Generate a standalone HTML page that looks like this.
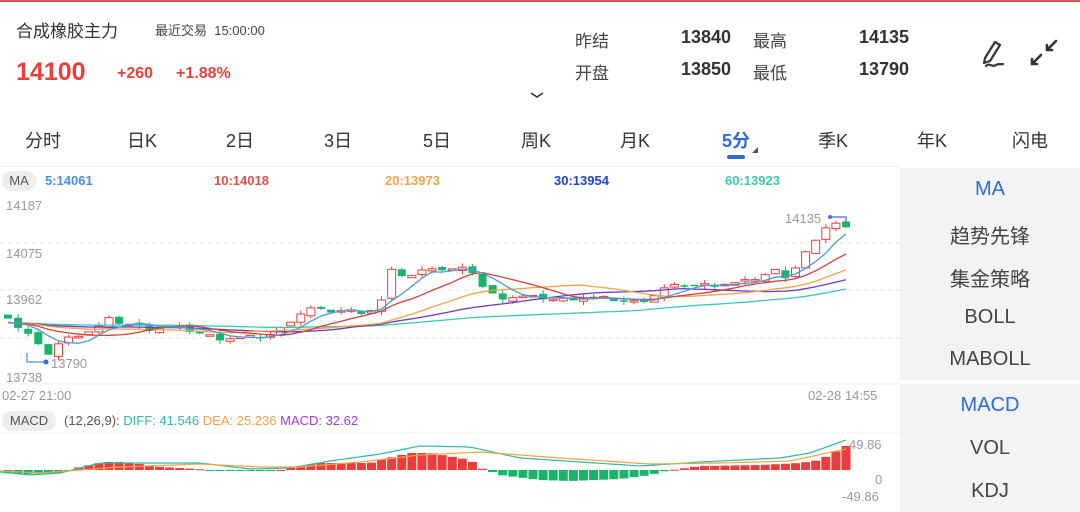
<!DOCTYPE html>
<html><head><meta charset="utf-8">
<style>
*{margin:0;padding:0;box-sizing:border-box}
body{width:1080px;height:512px;background:#fff;font-family:"Liberation Sans","Noto Sans CJK SC",sans-serif;position:relative;overflow:hidden;color:#333}
.a{position:absolute;white-space:nowrap}
.topline{position:absolute;left:0;top:0;width:1080px;height:2px;background:#d9534f}
.tab{position:absolute;top:127px;font-size:18px;color:#333;width:80px;text-align:center;margin-left:-40px}
.side{position:absolute;left:900px;width:180px;background:#f2f3f5}
.side div{position:absolute;width:180px;text-align:center;font-size:20px;color:#444}
.lab{font-size:13px;color:#999}
</style></head><body>
<div class="topline"></div>
<div class="a" style="left:16px;top:17px;font-size:17px;color:#333">合成橡胶主力</div>
<div class="a" style="left:155px;top:20px;font-size:13px;color:#444">最近交易&nbsp; 15:00:00</div>
<div class="a" style="left:16px;top:58px;font-size:25px;font-weight:bold;color:#e8413c">14100</div>
<div class="a" style="left:117px;top:65px;font-size:16px;font-weight:bold;color:#e8413c">+260</div>
<div class="a" style="left:176px;top:65px;font-size:16px;font-weight:bold;color:#e8413c">+1.88%</div>
<div class="a" style="left:575px;top:27px;font-size:17px;color:#444">昨结</div>
<div class="a" style="left:575px;top:59px;font-size:17px;color:#444">开盘</div>
<div class="a" style="left:681px;top:27px;font-size:18px;font-weight:bold;color:#333">13840</div>
<div class="a" style="left:681px;top:59px;font-size:18px;font-weight:bold;color:#333">13850</div>
<div class="a" style="left:753px;top:27px;font-size:17px;color:#444">最高</div>
<div class="a" style="left:753px;top:59px;font-size:17px;color:#444">最低</div>
<div class="a" style="left:859px;top:27px;font-size:18px;font-weight:bold;color:#333">14135</div>
<div class="a" style="left:859px;top:59px;font-size:18px;font-weight:bold;color:#333">13790</div>
<svg class="a" style="left:528px;top:88px" width="18" height="12"><path d="M3 5 L9 9 L15 5" stroke="#333" stroke-width="1.6" fill="none"/></svg>
<svg class="a" style="left:975px;top:36px" width="100" height="40">
<path d="M10 22 L20 6 L25 9 L15 25 L9 27 Z" stroke="#333" stroke-width="2.2" fill="none" stroke-linejoin="round"/>
<path d="M11 30 C15 26 17 32 21 29 C24 27 26 29 28 28" stroke="#333" stroke-width="2.2" fill="none" stroke-linecap="round"/>
<path d="M57 28 L66 19 M57 28 L57 23 M57 28 L62 28" stroke="#333" stroke-width="2.6" fill="none" stroke-linecap="round"/>
<path d="M81 5 L72 14 M72 14 L72 9 M72 14 L77 14" stroke="#333" stroke-width="2.6" fill="none" stroke-linecap="round"/>
</svg>
<div class="tab" style="left:43px">分时</div>
<div class="tab" style="left:142px">日K</div>
<div class="tab" style="left:240px">2日</div>
<div class="tab" style="left:338px">3日</div>
<div class="tab" style="left:437px">5日</div>
<div class="tab" style="left:536px">周K</div>
<div class="tab" style="left:635px">月K</div>
<div class="tab" style="left:736px;color:#2f6bd6;font-weight:bold">5分</div>
<div class="a" style="left:752px;top:147px;width:0;height:0;border-left:6px solid transparent;border-bottom:6px solid #555"></div>
<div class="a" style="left:727px;top:155px;width:18px;height:4px;border-radius:2px;background:#2f6bd6"></div>
<div class="tab" style="left:833px">季K</div>
<div class="tab" style="left:932px">年K</div>
<div class="tab" style="left:1030px">闪电</div>

<div class="a" style="left:0;top:166px;width:900px;height:1px;background:#eee"></div>
<div class="a" style="left:2px;top:171px;width:34px;height:20px;border-radius:10px;background:#eee;font-size:13px;color:#555;text-align:center;line-height:20px">MA</div>
<div class="a" style="left:45px;top:173px;font-size:13px;font-weight:bold;color:#4a8fdc">5:14061</div>
<div class="a" style="left:214px;top:173px;font-size:13px;font-weight:bold;color:#e0504b">10:14018</div>
<div class="a" style="left:385px;top:173px;font-size:13px;font-weight:bold;color:#f3a344">20:13973</div>
<div class="a" style="left:554px;top:173px;font-size:13px;font-weight:bold;color:#2443c8">30:13954</div>
<div class="a" style="left:725px;top:173px;font-size:13px;font-weight:bold;color:#3cc8b0">60:13923</div>

<svg class="a" style="left:0;top:0" width="900" height="512" id="ch"></svg>

<div class="a lab" style="left:6px;top:198px">14187</div>
<div class="a lab" style="left:6px;top:246px">14075</div>
<div class="a lab" style="left:6px;top:292px">13962</div>
<div class="a lab" style="left:6px;top:370px">13738</div>
<div class="a lab" style="left:51px;top:356px">13790</div>
<div class="a lab" style="left:785px;top:211px">14135</div>
<div class="a lab" style="left:2px;top:388px">02-27 21:00</div>
<div class="a lab" style="left:808px;top:388px">02-28 14:55</div>

<div class="a" style="left:2px;top:411px;width:54px;height:20px;border-radius:10px;background:#eee;font-size:13px;color:#555;text-align:center;line-height:20px">MACD</div>
<div class="a" style="left:64px;top:413px;font-size:13px;color:#555">(12,26,9): <span style="color:#2fb8a8">DIFF: 41.546</span> <span style="color:#f3a344">DEA: 25.236</span> <span style="color:#9b3fd6">MACD: 32.62</span></div>
<div class="a lab" style="left:849px;top:437px">49.86</div>
<div class="a lab" style="left:875px;top:472px">0</div>
<div class="a lab" style="left:842px;top:489px">-49.86</div>

<div class="side" style="top:168px;height:212px">
<div style="top:10px;color:#2f6bd6">MA</div>
<div style="top:52px">趋势先锋</div>
<div style="top:95px">集金策略</div>
<div style="top:138px">BOLL</div>
<div style="top:180px">MABOLL</div>
</div>
<div class="side" style="top:384px;height:128px">
<div style="top:10px;color:#2f6bd6">MACD</div>
<div style="top:53px">VOL</div>
<div style="top:96px">KDJ</div>
</div>

<script>
var kp=[[8,13900],[20,13870],[30,13855],[40,13825],[50,13810],[60,13840],[75,13855],[95,13870],[110,13895],[120,13885],[135,13880],[150,13870],[170,13878],[185,13870],[200,13860],[220,13848],[240,13850],[260,13852],[275,13860],[295,13900],[310,13920],[325,13912],[345,13915],[365,13910],[380,13925],[390,14010],[400,14000],[415,13998],[430,14020],[445,14010],[460,14015],[475,14005],[485,13960],[500,13945],[520,13948],[540,13945],[560,13940],[580,13945],[600,13945],[620,13938],[635,13935],[650,13942],[660,13965],[680,13975],[700,13975],[720,13978],[740,13980],[760,13995],[775,14010],[790,13990],[800,14040],[815,14075],[830,14130],[846,14110]];
function lerp(arr,x){if(x<=arr[0][0])return arr[0][1];for(var i=0;i<arr.length-1;i++){if(x<=arr[i+1][0]){var t=(x-arr[i][0])/(arr[i+1][0]-arr[i][0]);return arr[i][1]+t*(arr[i+1][1]-arr[i][1]);}}return arr[arr.length-1][1];}
function ip(x){return lerp(kp,x);}
function Y(p){return 218+(14135-p)*0.42;}
var s='',N=84,xs=[],cl=[];
for(var i=0;i<N;i++){var x=8+i*(838/(N-1));xs.push(x);cl.push(ip(x)+((i*37)%7-3)*1.5);}
[243,290,338].forEach(function(y){s+='<line x1="0" x2="900" y1="'+y+'" y2="'+y+'" stroke="#e6e6e6" stroke-dasharray="4 4"/>';});
s+='<line x1="0" x2="900" y1="384" y2="384" stroke="#f0f0f0"/><line x1="0" x2="900" y1="433" y2="433" stroke="#f0f0f0"/>';
function ma(n){var pts=[];for(var i=0;i<N;i++){var sum=0;for(var k=0;k<n;k++){var j=i-k;sum+=j>=0?cl[j]:13885;}pts.push(xs[i].toFixed(1)+','+Y(sum/n).toFixed(1));}return pts.join(' ');}
var mac=[[60,'#3cc8b0'],[30,'#6a3bc8'],[20,'#f3a344'],[10,'#d43f3a'],[5,'#4a9ad8']];
var cs='';
for(var i=0;i<N;i++){var o=i?cl[i-1]+((i*13)%5-2)*2:13905,c=cl[i],h=Math.max(o,c)+((i*7)%4)*3,l=Math.min(o,c)-((i*11)%4)*3;var up=c>=o,col=up?'#e8413c':'#19b36b';var x=xs[i];
cs+='<line x1="'+x+'" x2="'+x+'" y1="'+Y(h)+'" y2="'+Y(l)+'" stroke="'+col+'" stroke-width="1"/>';
var t=Y(Math.max(o,c)),b=Y(Math.min(o,c));if(b-t<1.5)b=t+1.5;
cs+='<rect x="'+(x-4)+'" y="'+t+'" width="8" height="'+(b-t)+'" '+(up?'fill="#fff" stroke="'+col+'" stroke-width="1"':'fill="'+col+'"')+'/>';}
s+=cs;
mac.forEach(function(m){s+='<polyline points="'+ma(m[0])+'" fill="none" stroke="'+m[1]+'" stroke-width="1.3"/>';});
s+='<polyline points="27,353 27,362 46,362" fill="none" stroke="#4a9ad8" stroke-width="1.3"/><circle cx="46" cy="362" r="2.5" fill="#2f6bd6"/>';
s+='<polyline points="830,217 846,217 846,222" fill="none" stroke="#4a6ad8" stroke-width="1.3"/><circle cx="830" cy="217" r="2" fill="#4a6ad8"/>';
// MACD hardcoded shape
var hk=[[0,-3],[30,-4],[60,-3],[70,0],[80,3],[105,8],[125,8],[160,3],[198,1],[210,-1],[260,-1],[280,0],[290,2],[320,7],[370,7],[380,10],[410,17],[430,17],[470,10],[480,2],[490,-1],[500,-5],[540,-10],[570,-11],[620,-9],[650,-5],[665,-1],[680,1],[700,4],[760,5],[800,7],[820,10],[846,24]];
var dk=[[0,472],[30,475],[60,473],[100,463],[200,463],[250,469],[290,468],[330,461],[380,454],[420,446],[470,447],[520,458],[640,466],[700,462],[780,458],[810,453],[846,440]];
var ek=[[0,471],[40,473],[120,467],[200,464],[260,467],[300,467],[360,462],[420,455],[480,452],[560,458],[650,464],[720,463],[790,461],[846,449]];
var z=470,ms='';
for(var i=0;i<N;i++){var v=lerp(hk,xs[i]),col=v>=0?'#ee3b3b':'#19b36b';ms+='<rect x="'+(xs[i]-4.5)+'" y="'+Math.min(z,z-v)+'" width="9" height="'+Math.max(1,Math.abs(v))+'" fill="'+col+'"/>';}
s+=ms;
function pl(arr){var p=[];for(var x=0;x<=846;x+=6)p.push(x+','+lerp(arr,x).toFixed(1));return p.join(' ');}
s+='<polyline points="'+pl(dk)+'" fill="none" stroke="#2fb8a8" stroke-width="1.2"/>';
s+='<polyline points="'+pl(ek)+'" fill="none" stroke="#f3a344" stroke-width="1.2"/>';
document.getElementById('ch').innerHTML=s;
</script>
</body></html>
